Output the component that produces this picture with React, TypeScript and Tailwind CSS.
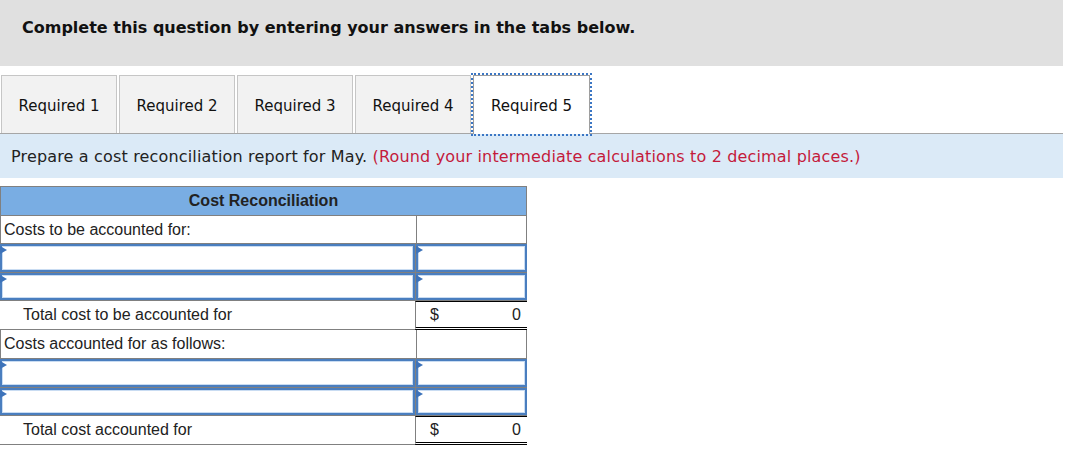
import React from 'react';

const verdana = { fontFamily: '"DejaVu Sans", Verdana, sans-serif' };
const arial = { fontFamily: '"Liberation Sans", Arial, sans-serif' };

function Tabs() {
  const tabs = ['Required 1', 'Required 2', 'Required 3', 'Required 4', 'Required 5'];
  return (
    <div className="mt-[9px] flex h-[59px] items-stretch gap-[2px] border-b border-[#a6a6a6] pl-px">
      {tabs.map((t, i) =>
        i === 4 ? (
          <div
            key={t}
            className="relative -mb-px flex w-[117px] items-center justify-center border border-b-0 border-[#9e9e9e] bg-white pt-[2px] text-[15px] text-[#111] outline-2 outline-offset-0 outline-dotted outline-[#3b76c4]"
          >
            {t}
          </div>
        ) : (
          <div
            key={t}
            className="flex w-[116px] items-center justify-center border border-b-0 border-[#c6c6c6] bg-[#f2f2f2] pt-[3px] text-[15px] text-[#111]"
          >
            {t}
          </div>
        ),
      )}
    </div>
  );
}

function InputBox({ w }: { w: string }) {
  return (
    <div className={`relative h-full ${w} border-2 border-[#4a7ebf] bg-white shadow-[inset_0_0_0_1px_#c9dcf2]`}>
      <span className="absolute left-[-2px] top-0 h-0 w-0 border-y-[4px] border-l-[7px] border-y-transparent border-l-[#3d73ba]" />
    </div>
  );
}

function InputRow({ h }: { h: string }) {
  return (
    <div className={`flex ${h} border-b border-[#808080]`}>
      <InputBox w="w-[415px]" />
      <div className="w-px bg-[#808080]" />
      <InputBox w="w-[111px]" />
    </div>
  );
}

function LabelRow({ label, h }: { label: string; h: string }) {
  return (
    <div className={`flex ${h}`}>
      <div className="flex w-[416px] items-center border-b border-l border-[#808080] px-[3px]">{label}</div>
      <div className="w-[111px] border-x border-b border-[#808080]" />
    </div>
  );
}

function TotalRow({ label, h }: { label: string; h: string }) {
  return (
    <div className={`flex ${h}`}>
      <div className="flex w-[415px] items-center border-b border-[#808080] pl-[23px]">{label}</div>
      <div className="flex w-[112px] items-center justify-between border-l border-t border-b-[3px] border-l-[#808080] border-t-black border-b-black pl-[14px] pr-[6px] [border-bottom-style:double]">
        <span>$</span>
        <span>0</span>
      </div>
    </div>
  );
}

export default function App() {
  return (
    <div className="w-[1063px] bg-white pb-4 text-black">
      <div className="h-[66px] bg-[#e0e0e0] pl-[22px] pt-[16px]" style={verdana}>
        <span className="text-[16px] font-bold leading-[20px] text-[#111]">
          Complete this question by entering your answers in the tabs below.
        </span>
      </div>

      <div style={verdana}>
        <Tabs />
        <div className="flex h-[44px] items-center bg-[#dbeaf7] pl-[11px] pt-[2px] text-[16px] tracking-[0.16px] text-[#222]">
          <span>
            Prepare a cost reconciliation report for May.{' '}
            <span className="text-[#c41a3b]">(Round your intermediate calculations to 2 decimal places.)</span>
          </span>
        </div>
      </div>

      <div className="mt-[8px] w-[527px] text-[16px] text-[#222]" style={arial}>
        <div className="flex h-[30px] items-center justify-center border border-[#808080] bg-[#79ade3] font-bold">
          Cost Reconciliation
        </div>
        <LabelRow label="Costs to be accounted for:" h="h-[28px]" />
        <InputRow h="h-[29px]" />
        <InputRow h="h-[28px]" />
        <TotalRow label="Total cost to be accounted for" h="h-[29px]" />
        <LabelRow label="Costs accounted for as follows:" h="h-[29px]" />
        <InputRow h="h-[29px]" />
        <InputRow h="h-[28px]" />
        <TotalRow label="Total cost accounted for" h="h-[29px]" />
      </div>
    </div>
  );
}
